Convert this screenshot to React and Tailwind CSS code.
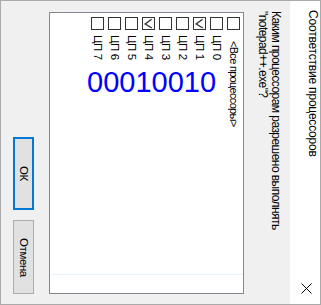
import React from 'react';

const cpus = [7, 6, 5, 4, 3, 2, 1, 0];
const checked = [1, 4];

const Box = ({ on }) => {
  return (
    <span className="flex h-[13px] w-[13px] shrink-0 border border-[#333333] bg-white">
      {on && (
        <svg width="11" height="11" viewBox="0 0 11 11">
          <path d="M8.6 1.3L2.2 6L8.8 10" fill="none" stroke="#333333" strokeWidth="1.4" />
        </svg>
      )}
    </span>
  );
};

const App = () => {
  return (
    <div className="flex h-[305px] w-[321px] border border-[#aaaaaa] font-['Liberation_Sans',Arial,sans-serif] text-[12px] text-black">
      <div className="flex flex-1 bg-[#f0f0f0]">
        {/* buttons */}
        <div className="ml-[12px] flex w-[21px] flex-col justify-end gap-[10px] pb-[10px]">
          <button className="flex h-[73px] items-center justify-center border-2 border-[#0078d7] bg-[#e1e1e1]">
            <span className="whitespace-nowrap text-[11.5px] leading-[13px] tracking-[-0.4px] [writing-mode:vertical-rl]">ОК</span>
          </button>
          <button className="flex h-[74px] items-center justify-center border border-[#adadad] bg-[#e1e1e1]">
            <span className="whitespace-nowrap text-[11.5px] leading-[13px] tracking-[-0.4px] [writing-mode:vertical-rl]">Отмена</span>
          </button>
        </div>

        {/* cpu list */}
        <div className="relative ml-[15px] mt-[11px] flex h-[282px] w-[195px] flex-col border border-[#828790] bg-white">
          <div className="flex flex-1 justify-end pr-[1px]">
            {cpus.map((n) => (
              <div key={n} className="flex w-[17px] flex-col items-center pt-[4px]">
                <Box on={checked.includes(n)} />
                <span className="mt-[5px] whitespace-nowrap text-[11.5px] leading-[13px] tracking-[-0.4px] [writing-mode:vertical-rl]">ЦП {n}</span>
              </div>
            ))}
            <div className="flex w-[17px] flex-col items-center pt-[4px]">
              <Box />
              <span className="mt-[11px] whitespace-nowrap text-[11px] leading-[13px] tracking-[-0.7px] [writing-mode:vertical-rl]">&lt;Все процессоры&gt;</span>
            </div>
          </div>
          <div className="ml-[1px] h-px bg-[#e8f2fd]" />
          <div className="h-[18px]" />
          <div className="absolute left-[37px] top-[55px] text-[29px] leading-none text-[#0000ff]">00010010</div>
        </div>

        {/* prompt */}
        <p className="ml-[12px] mt-[10px] whitespace-nowrap leading-[13px] tracking-[-0.55px] [writing-mode:vertical-rl]">
          Каким процессорам разрешено выполнять
          <br />
          "notepad++.exe"?
        </p>
      </div>

      {/* title bar */}
      <div className="flex w-[30px] flex-col justify-between bg-white pb-[10px] pl-[4px] pt-[9px]">
        <span className="whitespace-nowrap leading-[15px] tracking-[-0.2px] [writing-mode:vertical-rl]">Соответствие процессоров</span>
        <svg className="ml-[7px]" width="11" height="11" viewBox="0 0 11 11">
          <path d="M0.5 0.5L10.5 10.5M10.5 0.5L0.5 10.5" stroke="#000" strokeWidth="1" />
        </svg>
      </div>
    </div>
  );
};

export default App;
